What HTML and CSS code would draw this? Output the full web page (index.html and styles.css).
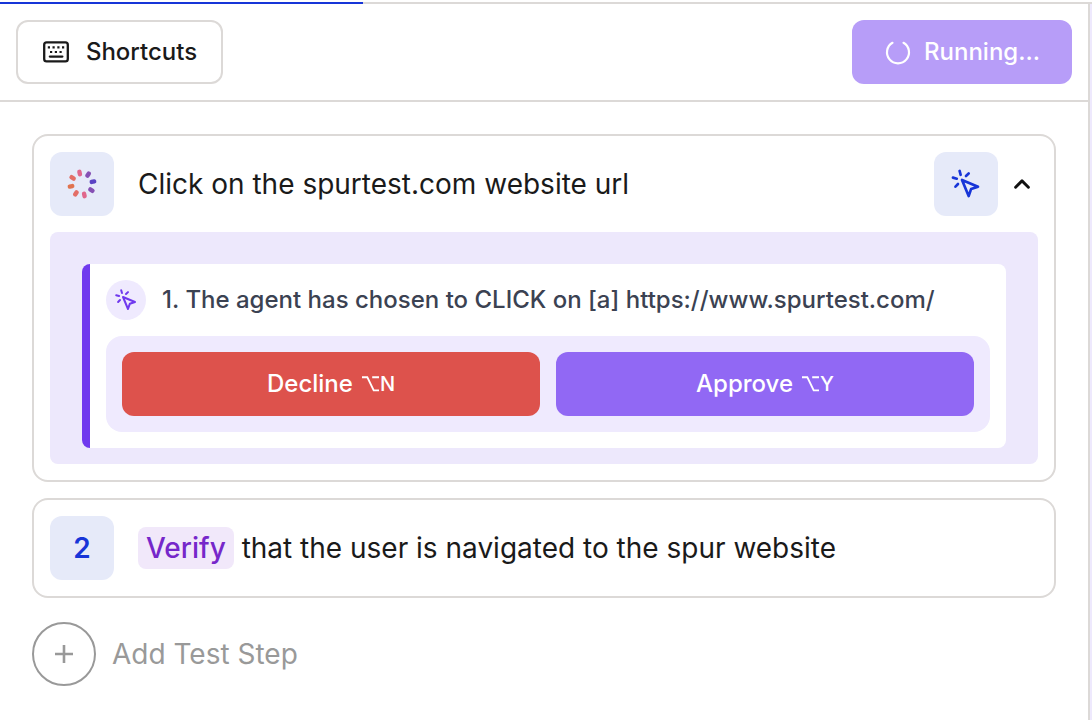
FILE: index.html
```
<!DOCTYPE html>
<html lang="en">
<head>
    <meta charset="UTF-8">
    <meta name="viewport" content="width=device-width, initial-scale=1.0">
    <title>Test Steps</title>
    <link rel="stylesheet" href="styles.css">
</head>
<body>
    <div class="progress">
        <div class="progress-bar"></div>
    </div>
    <div class="layout">
        <main class="panel">
            <header class="toolbar">
                <button class="button button-shortcuts">
                    <svg width="28" height="28" viewBox="0 0 28 28" fill="none" stroke="currentColor" stroke-width="2.3">
                        <rect x="2.2" y="4.4" width="23.6" height="19" rx="2.4"/>
                        <path d="M7.8 18.6h12.6" stroke-linecap="round" stroke-width="2.2"/>
                        <path d="M5.8 9.4h2.2M10.5 9.4h2.2M15.3 9.4h2.2M20 9.4h2.2M8 14h2.2M12.8 14h2.2M17.5 14h2.2" stroke-width="2.2"/>
                    </svg>
                    <span class="label">Shortcuts</span>
                </button>
                <button class="button button-running">
                    <svg width="28" height="28" viewBox="0 0 28 28" fill="none" stroke="currentColor" stroke-width="2.2" stroke-linecap="round">
                        <path d="M8.5 4.8a11 11 0 1 0 11 0"/>
                    </svg>
                    <span class="label">Running...</span>
                </button>
            </header>

            <div class="steps">
                <section class="step">
                    <div class="step-header">
                        <div class="tile">
                            <svg width="32" height="32" viewBox="-16 -16 32 32">
                                <g transform="rotate(-12)">
                                    <rect class="petal pink" x="-2.2" y="-14.6" width="4.4" height="6.8" rx="2"/>
                                    <rect class="petal purple" x="-2.2" y="-14.6" width="4.4" height="6.8" rx="2" transform="rotate(45)"/>
                                    <rect class="petal indigo" x="-2.2" y="-14.6" width="4.4" height="6.8" rx="2" transform="rotate(90)"/>
                                    <rect class="petal purple" x="-2.2" y="-14.6" width="4.4" height="6.8" rx="2" transform="rotate(135)"/>
                                    <rect class="petal pink" x="-2.2" y="-14.6" width="4.4" height="6.8" rx="2" transform="rotate(180)"/>
                                    <rect class="petal coral" x="-2.2" y="-14.6" width="4.4" height="6.8" rx="2" transform="rotate(225)"/>
                                    <rect class="petal orange" x="-2.2" y="-14.6" width="4.4" height="6.8" rx="2" transform="rotate(270)"/>
                                    <rect class="petal coral" x="-2.2" y="-14.6" width="4.4" height="6.8" rx="2" transform="rotate(315)"/>
                                </g>
                            </svg>
                        </div>
                        <h2 class="step-title">Click on the spurtest.com website url</h2>
                        <div class="tile">
                            <svg width="32" height="32" viewBox="0 0 24 24" fill="none" stroke="currentColor" stroke-width="2" stroke-linecap="round" stroke-linejoin="round">
                                <path d="m9 9 5 12 1.8-5.2L21 14Z"/>
                                <path d="M7.2 2.2 8 5.1M5.1 8l-2.9-.8M14 4.1 12 6M6 12l-1.9 2"/>
                            </svg>
                        </div>
                        <svg class="chevron" width="16" height="16" viewBox="0 0 16 16" fill="none" stroke="currentColor" stroke-width="2.9" stroke-linecap="round" stroke-linejoin="round">
                            <path d="M1.6 11.2 8 4.9l6.4 6.3"/>
                        </svg>
                    </div>
                    <div class="step-body">
                        <div class="agent">
                            <div class="agent-message">
                                <div class="agent-icon">
                                    <svg width="24" height="24" viewBox="0 0 24 24" fill="none" stroke="currentColor" stroke-width="2" stroke-linecap="round" stroke-linejoin="round">
                                        <path d="m9 9 5 12 1.8-5.2L21 14Z"/>
                                        <path d="M7.2 2.2 8 5.1M5.1 8l-2.9-.8M14 4.1 12 6M6 12l-1.9 2"/>
                                    </svg>
                                </div>
                                <p class="label">1. The agent has chosen to CLICK on [a] https://www.spurtest.com/</p>
                            </div>
                            <div class="agent-actions">
                                <button class="button button-decline">
                                    <span class="label">Decline</span>
                                    <span class="keys">
                                        <svg width="18" height="16" viewBox="0 0 18 16" fill="none" stroke="currentColor" stroke-width="1.9">
                                            <path d="M0 1.2h5.3l6.4 13.2H17M10.2 1.2H17"/>
                                        </svg>N</span>
                                </button>
                                <button class="button button-approve">
                                    <span class="label">Approve</span>
                                    <span class="keys">
                                        <svg width="18" height="16" viewBox="0 0 18 16" fill="none" stroke="currentColor" stroke-width="1.9">
                                            <path d="M0 1.2h5.3l6.4 13.2H17M10.2 1.2H17"/>
                                        </svg>Y</span>
                                </button>
                            </div>
                        </div>
                    </div>
                </section>

                <section class="step">
                    <div class="step-header">
                        <div class="tile">2</div>
                        <h2 class="step-title"><span class="tag">Verify</span> that the user is navigated to the spur website</h2>
                    </div>
                </section>

                <div class="add-step">
                    <div class="add-icon">
                        <svg width="20" height="20" viewBox="0 0 20 20" fill="none" stroke="currentColor" stroke-width="2.6">
                            <path d="M1 10h18M10 1v18"/>
                        </svg>
                    </div>
                    <span>Add Test Step</span>
                </div>
            </div>
        </main>
        <aside class="sidebar"></aside>
    </div>
</body>
</html>
```
FILE: styles.css
```
* {
    box-sizing: border-box;
}
body {
    font-family: Inter, sans-serif;
    margin: 0;
    padding-top: 2px;
    height: 720px;
    overflow: hidden;
    background-color: #fff;
    color: #1a1a1a;
}
h2, p {
    margin: 0;
}
svg {
    display: block;
    flex: none;
}
.progress {
    height: 2px;
    background-color: #dcd9d7;
}
.progress-bar {
    width: 363px;
    height: 2px;
    background-color: #1735d8;
}
.layout {
    display: flex;
    height: 716px;
}
.panel {
    width: 1088px;
}
.sidebar {
    flex: 1;
    border-left: 2px solid #dcd9d7;
    background-color: #eee9fd;
}
.toolbar {
    display: flex;
    justify-content: space-between;
    align-items: center;
    height: 98px;
    padding: 0 16px;
    border-bottom: 2px solid #dcd9d7;
}
.button {
    display: flex;
    align-items: center;
    justify-content: center;
    height: 64px;
    padding: 0;
    border: none;
    border-radius: 12px;
    color: #fff;
    font-family: inherit;
    font-size: 24px;
    font-weight: 500;
    cursor: pointer;
}
.label {
    padding-bottom: 2px;
}
.button-shortcuts {
    width: 207px;
    gap: 16px;
    border: 2px solid #dcd9d7;
    background-color: #fff;
    color: #1a1a1a;
}
.button-running {
    width: 220px;
    gap: 12px;
    background-color: #b79df8;
}
.steps {
    display: flex;
    flex-direction: column;
    gap: 16px;
    padding: 32px;
}
.step {
    padding: 16px;
    border: 2px solid #dcd9d7;
    border-radius: 16px;
}
.step-header {
    display: flex;
    align-items: center;
}
.step-title {
    flex: 1;
    margin-left: 24px;
    font-size: 28px;
    font-weight: 400;
    line-height: 40px;
}
.tile {
    display: flex;
    justify-content: center;
    align-items: center;
    width: 64px;
    height: 64px;
    border-radius: 12px;
    background-color: #e6eaf9;
    color: #1735d8;
    font-size: 28px;
    font-weight: 600;
}
.petal.pink {
    fill: #e0678c;
}
.petal.purple {
    fill: #8650b4;
}
.petal.indigo {
    fill: #5b43c4;
}
.petal.coral {
    fill: #e36e67;
}
.petal.orange {
    fill: #e0734f;
}
.chevron {
    margin: 0 8px 0 16px;
    color: #111;
}
.step-body {
    margin-top: 16px;
    padding: 32px 32px 16px;
    border-radius: 8px;
    background-color: #ede8fc;
}
.agent {
    padding: 16px;
    border-left: 8px solid #7039ee;
    border-radius: 8px;
    background-color: #fff;
}
.agent-message {
    display: flex;
    align-items: center;
    gap: 16px;
    color: #3b4252;
    font-size: 24px;
    font-weight: 500;
    white-space: nowrap;
}
.agent-icon {
    display: flex;
    justify-content: center;
    align-items: center;
    width: 40px;
    height: 40px;
    border-radius: 50%;
    background-color: #efeafe;
    color: #7039ee;
}
.agent-actions {
    display: flex;
    gap: 16px;
    margin-top: 16px;
    padding: 16px;
    border-radius: 16px;
    background-color: #efeafe;
}
.agent-actions .button {
    flex: 1;
    gap: 9px;
}
.button-decline {
    background-color: #dd524c;
}
.button-approve {
    background-color: #9168f4;
}
.keys {
    display: flex;
    align-items: center;
    font-size: 20px;
}
.tag {
    padding: 4px 8px;
    border-radius: 8px;
    background-color: #f1e8fa;
    color: #7627ca;
    font-weight: 500;
}
.add-step {
    display: flex;
    align-items: center;
    gap: 16px;
    margin-top: 8px;
    color: #999;
    font-size: 28px;
}
.add-icon {
    display: flex;
    justify-content: center;
    align-items: center;
    width: 64px;
    height: 64px;
    border: 2px solid #999;
    border-radius: 50%;
}
```
